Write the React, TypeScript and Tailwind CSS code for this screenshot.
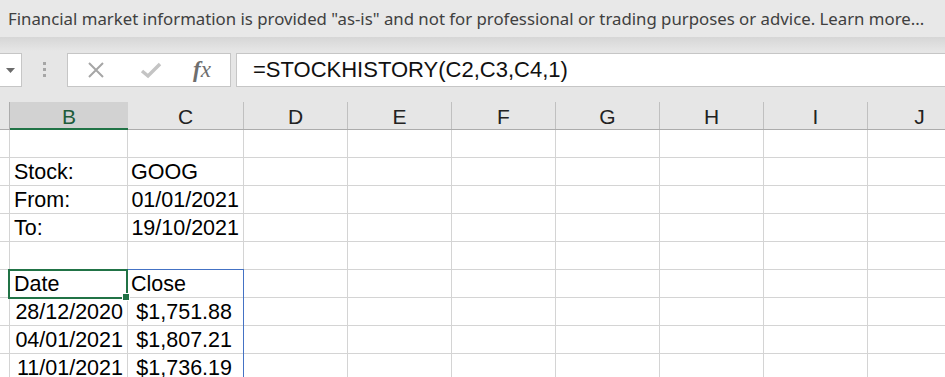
import React from "react";

const COLS = [
  { key: "A", w: 10 },
  { key: "B", w: 118 },
  { key: "C", w: 116 },
  { key: "D", w: 104 },
  { key: "E", w: 104 },
  { key: "F", w: 104 },
  { key: "G", w: 104 },
  { key: "H", w: 104 },
  { key: "I", w: 104 },
  { key: "J", w: 104 },
];

type Cell = { text: string; align?: "left" | "right"; pr?: string };

const ROWS: Record<string, Cell>[] = [
  {},
  { B: { text: "Stock:" }, C: { text: "GOOG" } },
  { B: { text: "From:" }, C: { text: "01/01/2021", align: "right" } },
  { B: { text: "To:" }, C: { text: "19/10/2021", align: "right" } },
  {},
  { B: { text: "Date" }, C: { text: "Close" } },
  { B: { text: "28/12/2020", align: "right" }, C: { text: "$1,751.88", align: "right", pr: "pr-[11px]" } },
  { B: { text: "04/01/2021", align: "right" }, C: { text: "$1,807.21", align: "right", pr: "pr-[11px]" } },
  { B: { text: "11/01/2021", align: "right" }, C: { text: "$1,736.19", align: "right", pr: "pr-[11px]" } },
];

function FormulaBar() {
  return (
    <div className="h-[65px] bg-[#e6e6e6] relative">
      <div className="absolute inset-x-0 top-0 h-[14px] bg-gradient-to-b from-[#d6d6d6] to-[#e6e6e6]" />
      <div className="relative flex pt-[16px] h-[50px]">
        {/* name box */}
        <div className="w-[22px] h-[34px] bg-white border border-l-0 border-[#c6c6c6] flex items-center justify-center">
          <svg width="9" height="5" viewBox="0 0 9 5">
            <path d="M0 0 H9 L4.5 5 Z" fill="#6b6b6b" />
          </svg>
        </div>
        <div className="w-[45px] flex flex-col items-center justify-center gap-[3px] pb-[2px]">
          <span className="w-[3px] h-[3px] bg-[#a6a6a6]" />
          <span className="w-[3px] h-[3px] bg-[#a6a6a6]" />
          <span className="w-[3px] h-[3px] bg-[#a6a6a6]" />
        </div>
        {/* cancel / enter / fx */}
        <div className="w-[164px] h-[34px] bg-white border border-[#c6c6c6] flex items-center">
          <svg width="20" height="20" viewBox="0 0 20 20" className="ml-[18px]">
            <path d="M3 3 L17 17 M17 3 L3 17" stroke="#a6a6a6" strokeWidth="2" />
          </svg>
          <svg width="22" height="18" viewBox="0 0 22 18" className="ml-[34px]">
            <path d="M2 10 L8 15 L20 3" stroke="#c4c4c4" strokeWidth="3.5" fill="none" />
          </svg>
          <span
            className="ml-[31px] text-[23px] italic text-[#6e6e6e] leading-none pb-[2px]"
            style={{ fontFamily: '"Liberation Serif", serif' }}
          >
            <span className="font-bold">f</span>x
          </span>
        </div>
        <div className="w-[5px]" />
        <div
          className="flex-1 h-[34px] bg-white border border-r-0 border-[#c6c6c6] flex items-center pl-[16px] text-[22px] text-[#111] leading-none"
          style={{ fontFamily: '"Liberation Sans", Arial, sans-serif' }}
        >
          =STOCKHISTORY(C2,C3,C4,1)
        </div>
      </div>
    </div>
  );
}

function HeaderRow() {
  return (
    <div className="flex h-[28px] bg-[#e6e6e6] border-b border-[#acacac]">
      {COLS.map((c) => (
        <div
          key={c.key}
          style={{ width: c.w }}
          className={
            "shrink-0 flex items-center justify-center text-[21px] leading-none " +
            (c.key === "B"
              ? "bg-[#d2d2d2] text-[#1e5c3b] border-b-2 border-[#217346] -mb-px pt-[2px]"
              : c.key === "A"
              ? "border-r border-[#acacac]"
              : "border-r border-[#c0c0c0] text-[#222] pt-[2px]")
          }
        >
          {c.key === "A" ? "" : c.key}
        </div>
      ))}
    </div>
  );
}

function Grid() {
  return (
    <div className="relative">
      {ROWS.map((row, ri) => (
        <div key={ri} className="flex h-[28px]">
          {COLS.map((c) => {
            const cell = row[c.key];
            return (
              <div
                key={c.key}
                style={{ width: c.w }}
                className={
                  "shrink-0 border-r border-b border-[#d4d4d4] flex items-end text-[21.5px] leading-none text-black pb-[2px] " +
                  (cell?.align === "right"
                    ? "justify-end " + (cell.pr ?? "pr-[4px]")
                    : c.key === "C"
                    ? "justify-start pl-[3px]"
                    : "justify-start pl-[4px]")
                }
              >
                {cell?.text ?? ""}
              </div>
            );
          })}
        </div>
      ))}
      {/* table range outline */}
      <div className="absolute left-[127px] top-[139px] w-[117px] h-[140px] border-t border-r border-[#4472c4] pointer-events-none" />
      {/* active cell */}
      <div className="absolute left-[8px] top-[139px] w-[120px] h-[30px] border-2 border-[#217346] pointer-events-none" />
      <div className="absolute left-[122px] top-[163px] w-[8px] h-[8px] bg-[#217346] border border-white pointer-events-none" />
    </div>
  );
}

export default function App() {
  return (
    <div
      className="w-[945px] h-[377px] overflow-hidden bg-white"
      style={{ fontFamily: '"Liberation Sans", Arial, sans-serif' }}
    >
      <div
        className="h-[37px] bg-[#e8e8e8] flex items-center pl-[8px] text-[16.8px] text-[#404040] whitespace-nowrap"
        style={{ fontFamily: '"Noto Sans", "Open Sans", sans-serif' }}
      >
        Financial market information is provided "as-is" and not for professional or trading purposes or advice. Learn more...
      </div>
      <FormulaBar />
      <HeaderRow />
      <Grid />
    </div>
  );
}
